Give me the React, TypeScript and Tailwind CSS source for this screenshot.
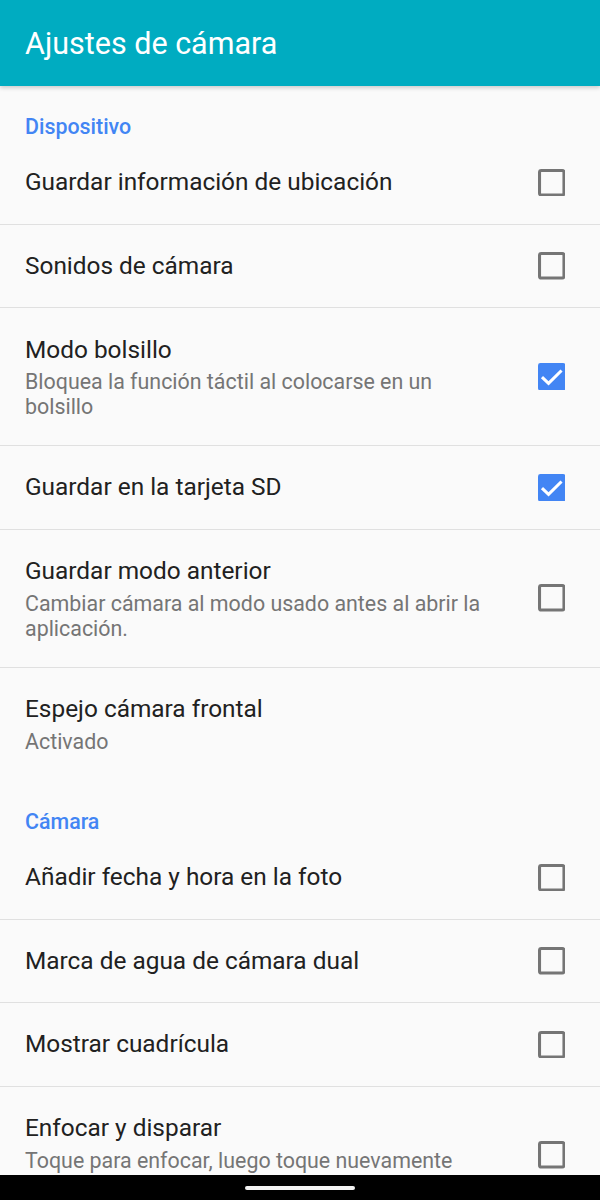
import React from "react";

type Pref = {
  title: string;
  summary?: string;
  checked?: boolean;
  divider?: boolean;
};

type Category = {
  name: string;
  items: Pref[];
};

const categories: Category[] = [
  {
    name: "Dispositivo",
    items: [
      { title: "Guardar información de ubicación", checked: false, divider: true },
      { title: "Sonidos de cámara", checked: false, divider: true },
      {
        title: "Modo bolsillo",
        summary: "Bloquea la función táctil al colocarse en un bolsillo",
        checked: true,
        divider: true,
      },
      { title: "Guardar en la tarjeta SD", checked: true, divider: true },
      {
        title: "Guardar modo anterior",
        summary: "Cambiar cámara al modo usado antes al abrir la aplicación.",
        checked: false,
        divider: true,
      },
      { title: "Espejo cámara frontal", summary: "Activado" },
    ],
  },
  {
    name: "Cámara",
    items: [
      { title: "Añadir fecha y hora en la foto", checked: false, divider: true },
      { title: "Marca de agua de cámara dual", checked: false, divider: true },
      { title: "Mostrar cuadrícula", checked: false, divider: true },
      {
        title: "Enfocar y disparar",
        summary: "Toque para enfocar, luego toque nuevamente para disparar",
        checked: false,
      },
    ],
  },
];

function CheckBox({ checked }: { checked: boolean }) {
  return (
    <svg width="27.5" height="27.5" viewBox="0 0 18 18" className="shrink-0">
      {checked ? (
        <>
          <rect x="0" y="0" width="18" height="18" rx="1.6" fill="#4285f4" />
          <polyline
            points="2.6,9.2 6.9,13.3 15.4,4.9"
            fill="none"
            stroke="#ffffff"
            strokeWidth="2"
          />
        </>
      ) : (
        <rect x="1" y="1" width="16" height="16" rx="1.2" fill="none" stroke="#757575" strokeWidth="2" />
      )}
    </svg>
  );
}

function PrefRow({ pref }: { pref: Pref }) {
  return (
    <div className={pref.divider ? "border-b border-[#e0e0e0]" : ""}>
      <div
        className={
          pref.summary
            ? "flex items-center pl-[25px] pr-[35px] py-[25.75px]"
            : "flex items-center pl-[25px] pr-[35px] py-[25.25px]"
        }
      >
        <div className="flex-1 min-w-0 pr-[40px]">
          <div className="text-[24.4px] leading-[32px] text-[#212121]">{pref.title}</div>
          {pref.summary && (
            <div className="mt-[3.5px] text-[21.4px] leading-[25px] text-[#757575]">{pref.summary}</div>
          )}
        </div>
        {pref.checked !== undefined && <CheckBox checked={pref.checked} />}
      </div>
    </div>
  );
}

export default function App() {
  return (
    <div
      className="relative h-[1200px] w-[600px] overflow-hidden bg-[#fafafa]"
      style={{ fontFamily: "Roboto, 'Noto Sans', sans-serif" }}
    >
      {/* Toolbar */}
      <div className="relative z-10 flex h-[85.5px] items-center bg-[#00acc1] px-[25px] pt-[2px] shadow-[0_2px_4px_rgba(0,0,0,0.18)]">
        <h1 className="text-[30.5px] leading-none text-white">Ajustes de cámara</h1>
      </div>

      {/* Preference list */}
      <div>
        {categories.map((cat, i) => (
          <div key={cat.name}>
            <div
              className={
                i === 0
                  ? "pl-[25px] pt-[28px] pb-[2.5px] text-[21.4px] leading-[25px] font-medium text-[#4285f4]"
                  : "pl-[25px] pt-[29px] pb-[2.5px] text-[21.4px] leading-[25px] font-medium text-[#4285f4]"
              }
            >
              {cat.name}
            </div>
            {cat.items.map((p) => (
              <PrefRow key={p.title} pref={p} />
            ))}
          </div>
        ))}
      </div>

      {/* Gesture nav bar */}
      <div className="absolute bottom-0 left-0 right-0 flex h-[25px] items-center justify-center bg-black">
        <div className="h-[4px] w-[110px] rounded-full bg-[#f2f2f2]" />
      </div>
    </div>
  );
}
